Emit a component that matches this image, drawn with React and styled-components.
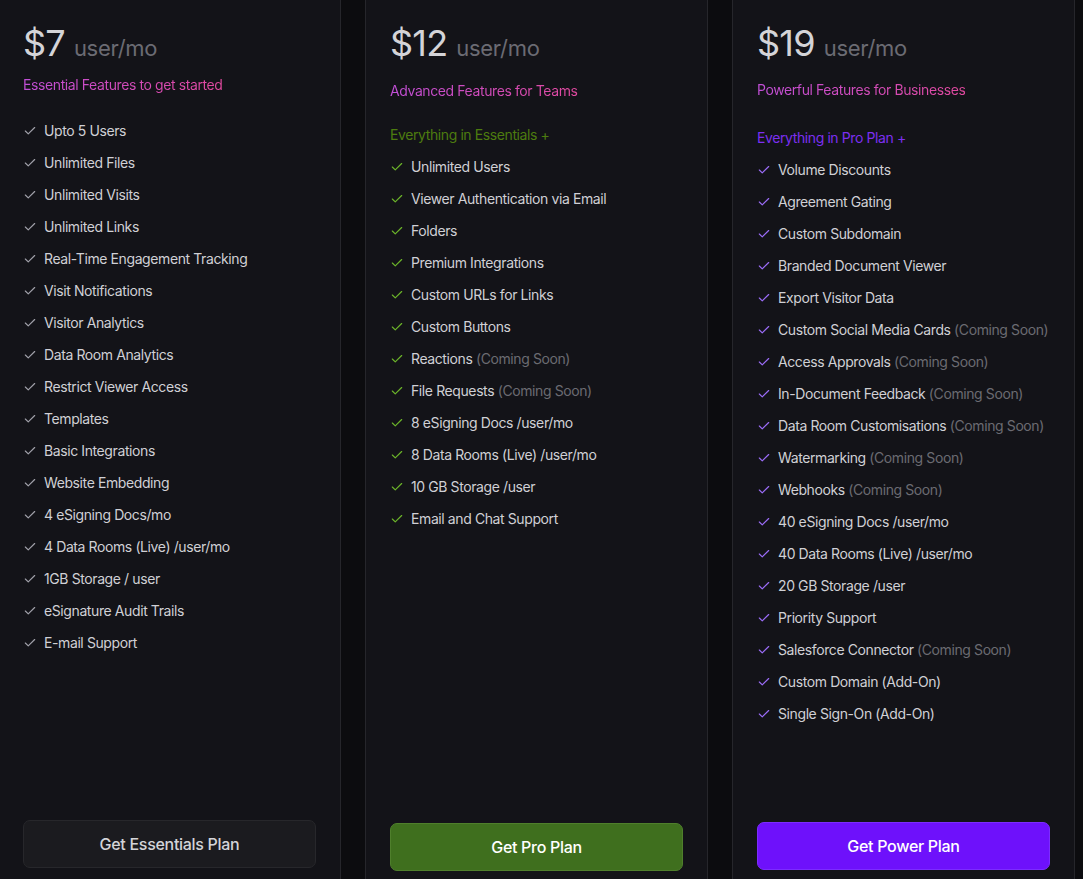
import styled, { createGlobalStyle } from "styled-components";

const GlobalStyle = createGlobalStyle`
  html, body {
    margin: 0;
    padding: 0;
    background: #0c0c0f;
    overflow: hidden;
  }
  body {
    font-family: Inter, "Noto Sans", sans-serif;
    -webkit-font-smoothing: antialiased;
  }
`;

const plans = [
  {
    price: "$7",
    subtitle: "Essential Features to get started",
    subGap: 8,
    headGap: 26,
    tail: 24,
    check: "#a1a1aa",
    button: "Get Essentials Plan",
    variant: "plain",
    features: [
      ["Upto 5 Users"],
      ["Unlimited Files"],
      ["Unlimited Visits"],
      ["Unlimited Links"],
      ["Real-Time Engagement Tracking"],
      ["Visit Notifications"],
      ["Visitor Analytics"],
      ["Data Room Analytics"],
      ["Restrict Viewer Access"],
      ["Templates"],
      ["Basic Integrations"],
      ["Website Embedding"],
      ["4 eSigning Docs/mo"],
      ["4 Data Rooms (Live) /user/mo"],
      ["1GB Storage / user"],
      ["eSignature Audit Trails"],
      ["E-mail Support"],
    ],
  },
  {
    price: "$12",
    subtitle: "Advanced Features for Teams",
    subGap: 14,
    headGap: 24,
    tail: 21,
    check: "#6cb52a",
    lead: "Everything in Essentials +",
    leadColor: "#4d7c0f",
    button: "Get Pro Plan",
    variant: "pro",
    features: [
      ["Unlimited Users"],
      ["Viewer Authentication via Email"],
      ["Folders"],
      ["Premium Integrations"],
      ["Custom URLs for Links"],
      ["Custom Buttons"],
      ["Reactions", true],
      ["File Requests", true],
      ["8 eSigning Docs /user/mo"],
      ["8 Data Rooms (Live) /user/mo"],
      ["10 GB Storage /user"],
      ["Email and Chat Support"],
    ],
  },
  {
    price: "$19",
    subtitle: "Powerful Features for Businesses",
    subGap: 13,
    headGap: 28,
    tail: 22,
    check: "#9b6cf7",
    lead: "Everything in Pro Plan +",
    leadColor: "#7c2ff0",
    button: "Get Power Plan",
    variant: "power",
    features: [
      ["Volume Discounts"],
      ["Agreement Gating"],
      ["Custom Subdomain"],
      ["Branded Document Viewer"],
      ["Export Visitor Data"],
      ["Custom Social Media Cards", true],
      ["Access Approvals", true],
      ["In-Document Feedback", true],
      ["Data Room Customisations", true],
      ["Watermarking", true],
      ["Webhooks", true],
      ["40 eSigning Docs /user/mo"],
      ["40 Data Rooms (Live) /user/mo"],
      ["20 GB Storage /user"],
      ["Priority Support"],
      ["Salesforce Connector", true],
      ["Custom Domain (Add-On)"],
      ["Single Sign-On (Add-On)"],
    ],
  },
];

const buttonColors = {
  plain: { bg: "#1b1b1f", border: "#27272b", color: "#d4d4d8" },
  pro: { bg: "#3f6f1e", border: "#4f7f2c", color: "#ffffff" },
  power: { bg: "#6e11fb", border: "#7d2cff", color: "#ffffff" },
};

const CheckIcon = ({ color }) => (
  <svg width="14" height="14" viewBox="0 0 24 24" fill="none" stroke={color} strokeWidth="2" strokeLinecap="round" strokeLinejoin="round">
    <path d="M20 6 9 17l-5-5" />
  </svg>
);

const App = () => {
  return (
    <>
      <GlobalStyle />
      <Page>
        <Grid>
          {plans.map((plan) => (
            <Card key={plan.price} $tail={plan.tail}>
              <PriceRow>
                <Price>{plan.price}</Price>
                <Unit>user/mo</Unit>
              </PriceRow>
              <Subtitle $gap={plan.subGap}>{plan.subtitle}</Subtitle>
              <Features $gap={plan.headGap}>
                {plan.lead && <Lead $color={plan.leadColor}>{plan.lead}</Lead>}
                {plan.features.map(([label, soon]) => (
                  <Feature key={label}>
                    <IconBox>
                      <CheckIcon color={plan.check} />
                    </IconBox>
                    <span>
                      {label}
                      {soon && <Soon> (Coming Soon)</Soon>}
                    </span>
                  </Feature>
                ))}
              </Features>
              <PlanButton $variant={plan.variant}>{plan.button}</PlanButton>
            </Card>
          ))}
        </Grid>
      </Page>
    </>
  );
};

const Page = styled.main`
  width: 1083px;
  height: 879px;
  overflow: hidden;
`;

const Grid = styled.div`
  display: grid;
  grid-template-columns: repeat(3, 343px);
  gap: 24px;
  margin: -20px 0 0 -2px;
  height: 913px;
`;

const Card = styled.section`
  display: flex;
  flex-direction: column;
  box-sizing: border-box;
  background: #131318;
  border: 1px solid #26262b;
  border-radius: 8px;
  padding: 42px 24px ${(p) => p.$tail}px;
`;

const PriceRow = styled.div`
  display: flex;
  align-items: baseline;
  gap: 9px;
  height: 40px;
  line-height: 40px;
  margin-bottom: 4px;
`;

const Price = styled.span`
  font-size: 36px;
  font-weight: 400;
  color: #d4d4d8;
  letter-spacing: -0.8px;
`;

const Unit = styled.span`
  font-size: 22px;
  font-weight: 400;
  color: #6b6b73;
  letter-spacing: -0.3px;
`;

const Subtitle = styled.p`
  margin: ${(p) => p.$gap}px 0 0;
  font-size: 14px;
  line-height: 20px;
  letter-spacing: -0.4px;
  align-self: flex-start;
  background: linear-gradient(to right, #c24fd8, #e2499f);
  -webkit-background-clip: text;
  background-clip: text;
  color: transparent;
`;

const Features = styled.ul`
  list-style: none;
  margin: ${(p) => p.$gap}px 0 0;
  padding: 0;
  display: flex;
  flex-direction: column;
  gap: 12px;
`;

const Lead = styled.li`
  font-size: 14px;
  line-height: 20px;
  letter-spacing: -0.4px;
  color: ${(p) => p.$color};
`;

const Feature = styled.li`
  display: flex;
  align-items: center;
  gap: 7px;
  font-size: 14px;
  line-height: 20px;
  letter-spacing: -0.4px;
  color: #d0d0d5;
  white-space: nowrap;
`;

const IconBox = styled.span`
  display: flex;
  width: 14px;
  height: 14px;
  flex-shrink: 0;
`;

const Soon = styled.span`
  color: #6b6b72;
`;

const PlanButton = styled.button`
  margin-top: auto;
  height: 48px;
  width: 100%;
  border-radius: 7px;
  font-family: inherit;
  font-size: 16px;
  font-weight: 500;
  letter-spacing: -0.3px;
  cursor: pointer;
  background: ${(p) => buttonColors[p.$variant].bg};
  border: 1px solid ${(p) => buttonColors[p.$variant].border};
  color: ${(p) => buttonColors[p.$variant].color};
`;

export default App;
